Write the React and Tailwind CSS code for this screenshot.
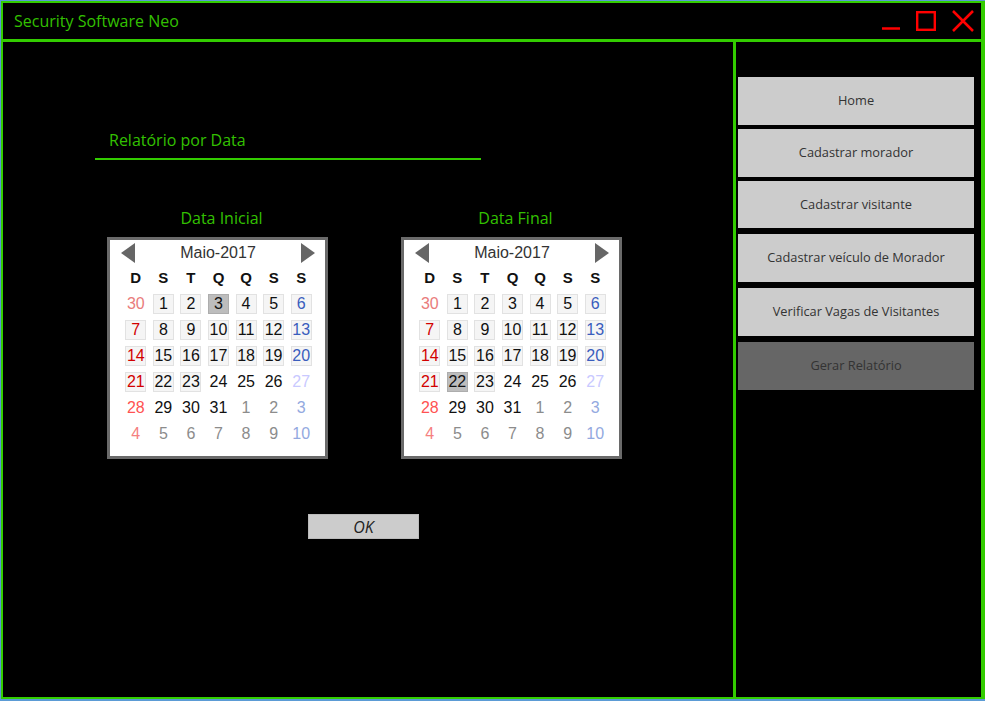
import React from "react";

// week rows of the May 2017 calendar: [day, kind]
const weeks = [
  [[30, "prev"], [1, "wd"], [2, "wd"], [3, "wd"], [4, "wd"], [5, "wd"], [6, "sat"]],
  [[7, "sun"], [8, "wd"], [9, "wd"], [10, "wd"], [11, "wd"], [12, "wd"], [13, "sat"]],
  [[14, "sun"], [15, "wd"], [16, "wd"], [17, "wd"], [18, "wd"], [19, "wd"], [20, "sat"]],
  [[21, "sun"], [22, "wd"], [23, "wd"], [24, "plain"], [25, "plain"], [26, "plain"], [27, "satFaint"]],
  [[28, "sunOut"], [29, "plain"], [30, "plain"], [31, "plain"], [1, "next"], [2, "next"], [3, "satNext"]],
  [[4, "sunNext"], [5, "next"], [6, "next"], [7, "next"], [8, "next"], [9, "next"], [10, "satNext"]],
];

const kindStyle = {
  prev: { color: "text-[#e97c7c]", boxed: false },
  sun: { color: "text-[#d20000]", boxed: true },
  sat: { color: "text-[#3a5dbd]", boxed: true },
  wd: { color: "text-[#111111]", boxed: true },
  plain: { color: "text-[#111111]", boxed: false },
  satFaint: { color: "text-[#c9c9ff]", boxed: false },
  sunOut: { color: "text-[#ff5252]", boxed: false },
  sunNext: { color: "text-[#f58080]", boxed: false },
  satNext: { color: "text-[#93a9e0]", boxed: false },
  next: { color: "text-[#8c8c8c]", boxed: false },
};

const Arrow = ({ dir }) => (
  <svg width="14" height="20" viewBox="0 0 14 20">
    {dir === "left" ? (
      <polygon points="14,0 14,20 0,10" fill="#666666" />
    ) : (
      <polygon points="0,0 14,10 0,20" fill="#666666" />
    )}
  </svg>
);

const Calendar = ({ selected }) => {
  return (
    <div className="w-[221px] h-[222px] border-[3px] border-[#6a6a6a] bg-white font-['Liberation_Sans',Arial,sans-serif]">
      {/* Month header */}
      <div className="h-[25px] flex items-center justify-between pl-[11px] pr-[10px]">
        <Arrow dir="left" />
        <span className="text-[16px] leading-[20px] text-[#333333]">Maio-2017</span>
        <Arrow dir="right" />
      </div>
      <div className="pl-[12px] pr-[10px]">
        {/* Weekday names */}
        <div className="grid grid-cols-7 h-[26px] items-center">
          {["D", "S", "T", "Q", "Q", "S", "S"].map((d, i) => (
            <span key={i} className="text-center text-[15px] font-bold text-[#111111] leading-[20px]">
              {d}
            </span>
          ))}
        </div>
        {weeks.map((week, wi) => (
          <div key={wi} className="grid grid-cols-7 h-[26px] items-center">
            {week.map(([day, kind], di) => {
              const s = kindStyle[kind];
              const isSel = selected === day && s.boxed;
              return (
                <div key={di} className="flex justify-center">
                  <span
                    className={`w-[21px] h-[20px] flex items-center justify-center text-[16px] leading-[20px] ${s.color} ${
                      isSel
                        ? "bg-[#bdbdbd] border border-[#adadad]"
                        : s.boxed
                        ? "bg-[#f5f5f5] border border-[#e2e2e2]"
                        : ""
                    }`}
                  >
                    {day}
                  </span>
                </div>
              );
            })}
          </div>
        ))}
      </div>
    </div>
  );
};

const navItems = [
  { label: "Home", mt: "mt-[35px]", h: "h-[48px]" },
  { label: "Cadastrar morador", mt: "mt-[4px]", h: "h-[48px]" },
  { label: "Cadastrar visitante", mt: "mt-[4px]", h: "h-[47px]" },
  { label: "Cadastrar veículo de Morador", mt: "mt-[6px]", h: "h-[48px]" },
  { label: "Verificar Vagas de Visitantes", mt: "mt-[6px]", h: "h-[48px]" },
  { label: "Gerar Relatório", mt: "mt-[6px]", h: "h-[48px]", active: true },
];

export default function App() {
  return (
    <div className="w-[985px] h-[701px] bg-[#5b9bd5] pl-px pt-px pb-[2px] font-['Open_Sans',sans-serif]">
      <div className="w-full h-full flex flex-col bg-black border-t-2 border-l-2 border-b-2 border-r-4 border-[#33cc00]">
        {/* Title bar */}
        <div className="h-[36px] flex items-center justify-between pl-[11px] pr-[7px] border-b-[3px] border-[#33cc00] box-content">
          <span className="text-[16px] text-[#33c000] leading-[22px]">Security Software Neo</span>
          <div className="flex items-center gap-[16px]">
            <svg width="18" height="22" viewBox="0 0 18 22">
              <line x1="0" y1="18.5" x2="18" y2="18.5" stroke="#ff0000" strokeWidth="2.5" />
            </svg>
            <svg width="20" height="20" viewBox="0 0 20 20">
              <rect x="1.2" y="1.2" width="17.6" height="17.6" fill="none" stroke="#ff0000" strokeWidth="2.4" />
            </svg>
            <svg width="22" height="22" viewBox="0 0 22 22">
              <path d="M1 1 L21 21 M21 1 L1 21" stroke="#ff0000" strokeWidth="2.5" />
            </svg>
          </div>
        </div>

        {/* Body */}
        <div className="flex flex-1">
          {/* Main area */}
          <div className="w-[730px] border-r-[3px] border-[#33cc00] box-content">
            <div className="mt-[87px] ml-[92px] w-[386px] border-b-2 border-[#33cc00] pb-[7px] pl-[14px]">
              <span className="block text-[16px] leading-[22px] text-[#33c000]">Relatório por Data</span>
            </div>

            <div className="mt-[48px] ml-[104px] flex gap-[73px]">
              <div className="w-[221px]">
                <div className="text-center pl-[8px] text-[16px] leading-[20px] text-[#33c000]">Data Inicial</div>
                <div className="mt-[9px]">
                  <Calendar selected={3} />
                </div>
              </div>
              <div className="w-[221px]">
                <div className="text-center pl-[8px] text-[16px] leading-[20px] text-[#33c000]">Data Final</div>
                <div className="mt-[9px]">
                  <Calendar selected={22} />
                </div>
              </div>
            </div>

            <button className="mt-[55px] ml-[305px] w-[111px] h-[25px] flex items-center justify-center bg-[#cccccc] border border-[#bbbbbb] text-[16px] italic text-[#222222]">
              OK
            </button>
          </div>

          {/* Sidebar */}
          <div className="flex-1 pl-[2px] pr-[7px] flex flex-col">
            {navItems.map((item) => (
              <div
                key={item.label}
                className={`${item.mt} ${item.h} flex items-center justify-center text-[12.8px] ${
                  item.active ? "bg-[#666666] text-[#333333]" : "bg-[#cccccc] text-[#333333]"
                }`}
              >
                {item.label}
              </div>
            ))}
          </div>
        </div>
      </div>
    </div>
  );
}
